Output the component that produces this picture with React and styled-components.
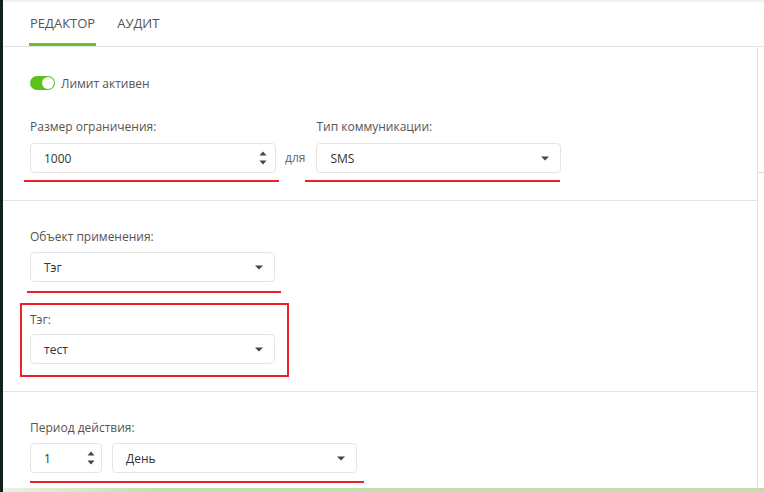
import React from 'react';
import styled, { createGlobalStyle } from 'styled-components';

const GlobalStyle = createGlobalStyle`
  html, body {
    margin: 0;
    padding: 0;
    background: #fff;
  }
  body {
    font-family: 'Open Sans', 'Liberation Sans', sans-serif;
    color: #555;
  }
`;

const Page = styled.div`
  display: flex;
  width: 764px;
  height: 492px;
  overflow: hidden;
`;

const Rail = styled.div`
  width: 3px;
  flex: none;
  background: #11231f;
`;

const Main = styled.div`
  flex: 1;
  display: flex;
  flex-direction: column;
  min-width: 0;
`;

const TopLine = styled.div`
  height: 2px;
  flex: none;
  background: #eef5e8;
`;

const TabBar = styled.div`
  height: 44px;
  flex: none;
  display: flex;
  gap: 20px;
  padding-left: 26px;
  border-bottom: 1px solid #e4e4e4;
`;

const Tab = styled.div`
  display: flex;
  align-items: center;
  padding: 0 1px;
  font-size: 13px;
  text-transform: uppercase;
  color: #555;
  border-bottom: 3px solid ${(p) => (p.$active ? '#6bc12c' : 'transparent')};
`;

const Body = styled.div`
  flex: 1;
  display: flex;
  min-height: 0;
`;

const Panel = styled.div`
  flex: 1;
  display: flex;
  flex-direction: column;
  border-right: 1px solid #e3e3e3;
`;

const Aside = styled.div`
  width: 6px;
  flex: none;
  margin-top: 125px;
  height: 0;
  border-top: 1px solid #dedede;
`;

const Section = styled.div`
  display: flex;
  flex-direction: column;
  align-items: flex-start;
  padding: ${(p) => p.$pad || '28px 27px 0'};
  border-bottom: ${(p) => (p.$last ? 'none' : '1px solid #e4e4e4')};
  flex: ${(p) => (p.$last ? 1 : 'none')};
`;

const BottomStrip = styled.div`
  height: 4px;
  flex: none;
  background: linear-gradient(90deg, #e9f2e0 0%, #c5deb0 20%, #c3ddae 100%);
`;

const ToggleRow = styled.label`
  display: flex;
  align-items: center;
  gap: 6px;
  height: 14px;
  font-size: 12px;
  color: #555;
  margin-bottom: 29px;
`;

const Switch = styled.span`
  position: relative;
  width: 25px;
  height: 14px;
  border-radius: 7px;
  background: #5cc11c;

  &::after {
    content: '';
    position: absolute;
    top: 1px;
    right: 1px;
    width: 12px;
    height: 12px;
    border-radius: 50%;
    background: #fff;
  }
`;

const Row = styled.div`
  display: flex;
  align-items: flex-end;
  gap: ${(p) => p.$gap || '10px'};
`;

const Field = styled.div`
  display: flex;
  flex-direction: column;
`;

const Label = styled.div`
  font-size: 12px;
  line-height: 16px;
  color: #555;
  margin-bottom: ${(p) => p.$mb || '7px'};
`;

const Box = styled.div`
  position: relative;
  box-sizing: border-box;
  width: ${(p) => p.$w}px;
  height: 30px;
  display: flex;
  align-items: center;
  justify-content: space-between;
  padding: 0 ${(p) => p.$pr || 10}px 0 13px;
  border: 1px solid #e5e5e5;
  border-radius: 4px;
  background: #fff;
  font-size: 12px;
  color: #333;

  ${(p) =>
    p.$mark &&
    `
    &::after {
      content: '';
      position: absolute;
      left: ${p.$mark[0]}px;
      right: ${p.$mark[1]}px;
      bottom: -${p.$mark[2]}px;
      height: 2px;
      background: #e8212b;
    }
  `}
`;

const MarkedRow = styled(Row)`
  position: relative;

  &::after {
    content: '';
    position: absolute;
    left: 0;
    right: -7px;
    bottom: -10px;
    height: 2px;
    background: #e8212b;
  }
`;

const Joiner = styled.span`
  height: 30px;
  line-height: 30px;
  margin-right: 2px;
  font-size: 12px;
  color: #666;
`;

const RedFrame = styled.div`
  display: flex;
  flex-direction: column;
  margin: 21px 0 14px -10px;
  padding: 7px 12px 11px 8px;
  border: 2px solid #e8212b;
`;

const Caret = () => (
  <svg width="8" height="5" viewBox="0 0 8 5">
    <path d="M0 0.5 L8 0.5 L4 4.5 Z" fill="#444" />
  </svg>
);

const Spinner = () => (
  <svg width="8" height="16" viewBox="0 0 8 16">
    <path d="M0.5 5.5 L4 1.5 L7.5 5.5 Z" fill="#444" />
    <path d="M0.5 10.5 L7.5 10.5 L4 14.5 Z" fill="#444" />
  </svg>
);

const Select = ({ value, w = 245, mark }) => (
  <Box $w={w} $pr={11} $mark={mark}>
    <span>{value}</span>
    <Caret />
  </Box>
);

const NumberInput = ({ value, w, pr = 8, mark }) => (
  <Box $w={w} $pr={pr} $mark={mark}>
    <span>{value}</span>
    <Spinner />
  </Box>
);

export default function App() {
  return (
    <>
      <GlobalStyle />
      <Page>
        <Rail />
        <Main>
          <TopLine />
          <TabBar>
            <Tab $active>Редактор</Tab>
            <Tab>Аудит</Tab>
          </TabBar>
          <Body>
            <Panel>
              <Section $pad="29px 27px 27px">
                <ToggleRow>
                  <Switch />
                  Лимит активен
                </ToggleRow>
                <Row $gap="9px">
                  <Field>
                    <Label $mb="8px">Размер ограничения:</Label>
                    <NumberInput value="1000" w={246} mark={[-7, -4, 10]} />
                  </Field>
                  <Joiner>для</Joiner>
                  <Field>
                    <Label $mb="8px">Тип коммуникации:</Label>
                    <Select value="SMS" mark={[-12, 0, 10]} />
                  </Field>
                </Row>
              </Section>

              <Section>
                <Label>Объект применения:</Label>
                <Select value="Тэг" mark={[-4, -7, 12]} />
                <RedFrame>
                  <Label $mb="6px">Тэг:</Label>
                  <Select value="тест" />
                </RedFrame>
              </Section>

              <Section $last>
                <Label>Период действия:</Label>
                <MarkedRow>
                  <NumberInput value="1" w={72} pr={6} />
                  <Select value="День" />
                </MarkedRow>
              </Section>
            </Panel>
            <Aside />
          </Body>
          <BottomStrip />
        </Main>
      </Page>
    </>
  );
}
